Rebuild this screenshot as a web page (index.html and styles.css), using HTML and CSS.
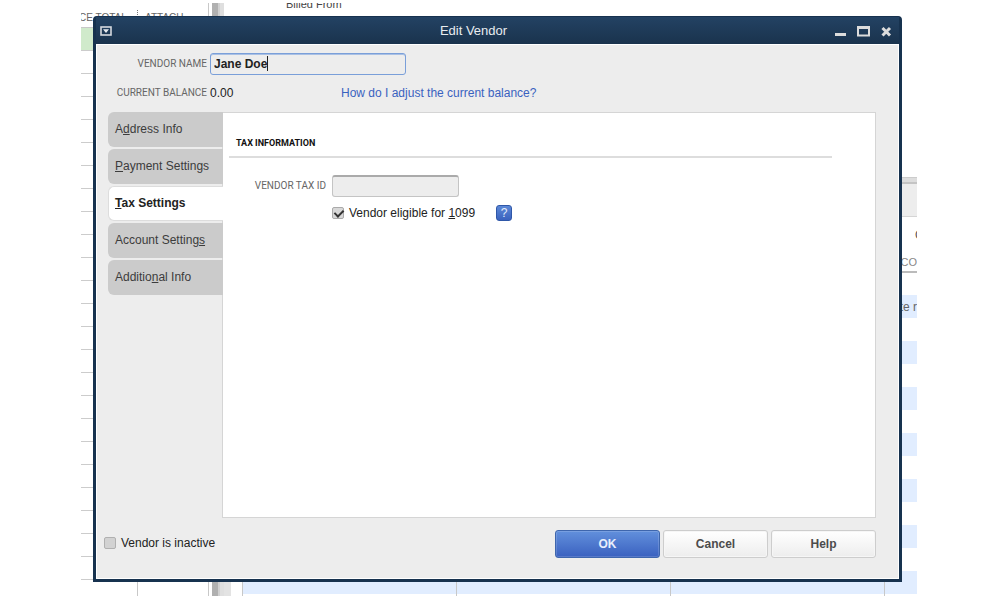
FILE: index.html
```html
<!doctype html>
<html lang="en">
<head>
	<meta charset="UTF-8">
	<title>Edit Vendor</title>

	<link rel="stylesheet" href="styles.css">
</head>
<body>
	<div class="workspace">
		<div class="ledger">
			<div class="ledger-head">
				<span class="ledger-col">CE TOTAL</span>
				<span class="ledger-col">ATTACH</span>
			</div>
			<div class="ledger-rows"></div>
		</div>
		<div class="scrollbar"></div>
		<div class="bill">
			<div class="bill-top">Billed From</div>
			<div class="bill-main">
				<div class="bill-toolbar"></div>
				<div class="bill-title">C</div>
				<div class="bill-head">CCO</div>
				<div class="bill-rows">
					<div class="bill-col"></div>
					<div class="bill-col"></div>
					<div class="bill-col"></div>
					<div class="bill-col bill-note">te r</div>
				</div>
			</div>
		</div>

		<form class="dialog">
			<header class="titlebar">
				<button type="button" class="win-button" aria-label="Window menu">
					<svg width="12" height="10" viewBox="0 0 12 10"><rect x="1" y="1" width="10" height="8" fill="none" stroke="#d5d9de" stroke-width="1.6"/><path d="M3 3.200h6L6 7z" fill="#e8ecf0"/></svg>
				</button>
				<h1>Edit Vendor</h1>
				<div class="win-buttons">
					<button type="button" class="win-button" aria-label="Minimize">
						<svg width="12" height="11" viewBox="0 0 12 11"><path d="M0 7h11v3h-11z" fill="#dcdcdc"/></svg>
					</button>
					<button type="button" class="win-button" aria-label="Maximize">
						<svg width="14" height="11" viewBox="0 0 14 11"><path d="M0 0h13v10.500h-13zM2 3v5.500h9V3z" fill="#dcdcdc" fill-rule="evenodd"/></svg>
					</button>
					<button type="button" class="win-button" aria-label="Close">
						<svg width="11" height="11" viewBox="0 0 11 11"><path d="M1.500 2l7.500 7.500M9 2l-7.500 7.500" stroke="#dcdcdc" stroke-width="3"/></svg>
					</button>
				</div>
			</header>

			<div class="content">
				<div class="row name-row">
					<label class="caption" for="name">VENDOR NAME</label>
					<span class="name-field">
						<input type="text" id="name" class="name" value="Jane Doe">
						<span class="caret"></span>
					</span>
				</div>
				<div class="row balance-row">
					<span class="caption">CURRENT BALANCE</span>
					<span class="balance">0.00</span>
					<a href="#">How do I adjust the current balance?</a>
				</div>

				<div class="tabbed">
					<div class="tabs" role="tablist">
						<button type="button" role="tab" class="tab">A<u>d</u>dress Info</button>
						<button type="button" role="tab" class="tab"><u>P</u>ayment Settings</button>
						<button type="button" role="tab" class="tab active" aria-selected="true"><u>T</u>ax Settings</button>
						<button type="button" role="tab" class="tab">Account Setting<u>s</u></button>
						<button type="button" role="tab" class="tab">Additio<u>n</u>al Info</button>
					</div>
					<section class="panel" role="tabpanel">
						<h2>TAX INFORMATION</h2>
						<div class="field">
							<label class="caption" for="tax-id">VENDOR TAX ID</label>
							<input type="text" id="tax-id" class="tax-id">
						</div>
						<div class="field eligible">
							<input type="checkbox" id="eligible" class="check" checked>
							<label for="eligible">Vendor eligible for <u>1</u>099</label>
							<button type="button" class="info">?</button>
						</div>
					</section>
				</div>

				<footer class="footer">
					<input type="checkbox" id="inactive" class="check">
					<label for="inactive">Vendor is inactive</label>
					<div class="actions">
						<button type="button" class="button primary">OK</button>
						<button type="button" class="button">Cancel</button>
						<button type="button" class="button">Help</button>
					</div>
				</footer>
			</div>
		</form>
	</div>
</body>
</html>
```
FILE: styles.css
```css
* {
	box-sizing: border-box;
}

body {
	margin: 0;
	background: #fff;
	font: 12px/16px "Liberation Sans", Arial, sans-serif;
	color: #222;
}

button,
input {
	margin: 0;
	padding: 0;
	font: inherit;
	color: inherit;
}

/* Windows behind the dialog */

.workspace {
	position: relative;
	display: flex;
	height: calc(100vh - 6px);
	min-height: 400px;
	margin: 3px 81px;
	overflow: hidden;
}

.ledger {
	display: flex;
	flex-direction: column;
	width: 128px;
	margin-right: 3px;
	border-right: 1px solid #c8c8c8;
}

.ledger-head {
	display: flex;
	height: 25px;
	padding-top: 7px;
	border-bottom: 1px solid #c8c8c8;
	font-size: 10px;
	color: #666;
}

.ledger-col {
	width: 56px;
	text-indent: -2px;
	white-space: nowrap;
}

.ledger-col + .ledger-col {
	border-left: 1px dotted #777;
	text-indent: 7px;
}

.ledger-rows {
	flex: 1;
	background:
		linear-gradient(#d0eacb, #d0eacb) 0 0 / 100% 22px no-repeat,
		linear-gradient(#c8c8c8, #c8c8c8) 56px 0 / 1px 100% no-repeat,
		repeating-linear-gradient(transparent 0 22px, #ccc 22px 23px);
}

.scrollbar {
	width: 12px;
	background: linear-gradient(to right, #b0b0b0 6px, #d0d0d0 6px 8px, #dfdfdf 8px);
}

.bill {
	flex: 1;
	display: flex;
	flex-direction: column;
	min-width: 0;
	overflow: hidden;
}

.bill-top {
	height: 174px;
	padding-left: 62px;
	margin-top: -7px;
	margin-bottom: 7px;
	font-size: 11px;
	color: #444;
}

.bill-main {
	flex: 1;
	display: flex;
	flex-direction: column;
	border-left: 7px solid #e3e3e3;
	padding-left: 11px;
	color: #666;
}

.bill-toolbar {
	height: 40px;
	border-top: 1px solid #ccc;
	border-bottom: 1px solid #d5d5d5;
	background: linear-gradient(#ddd 4px, #c4c4c4 4px 6px, #ededed 6px);
}

.bill-title {
	height: 36px;
	padding-top: 10px;
	text-indent: calc(100% - 2px);
	color: #555;
	white-space: nowrap;
}

.bill-head {
	height: 20px;
	padding-top: 1px;
	border-bottom: 2px solid #bbb;
	font-size: 11px;
	color: #888;
	text-align: right;
}

.bill-rows {
	flex: 1;
	display: flex;
	background: repeating-linear-gradient(transparent 0 22px, #e1edff 22px 45px, transparent 45px 46px);
}

.bill-col {
	width: 214px;
	border-left: 1px solid #c8c8c8;
}

.bill-note {
	flex: 1;
	padding-top: 26px;
	text-align: right;
}

/* Dialog */

.dialog {
	position: absolute;
	top: 13px;
	right: 15px;
	bottom: 14px;
	left: 12px;
	display: flex;
	flex-direction: column;
	border: 3px solid #17324f;
	border-top-width: 1px;
	border-radius: 4px 4px 0 0;
	background: #17324f;
}

.titlebar {
	display: flex;
	align-items: center;
	height: 27px;
	padding: 1px 7px 0 4px;
	background: linear-gradient(#234263, #1a334d);
	color: #e8ecf0;
}

.titlebar h1 {
	flex: 1;
	margin: 0;
	font-size: 13px;
	font-weight: normal;
	text-align: center;
}

.win-button {
	display: flex;
	border: 0;
	background: none;
}

.win-buttons {
	display: flex;
	gap: 10px;
}

.content {
	flex: 1;
	display: flex;
	flex-direction: column;
	padding: 8px 22px 20px 11px;
	border: 1px solid #fff;
	background: #ededed;
}

.row {
	display: flex;
	align-items: center;
	gap: 3px;
}

.row .caption {
	width: 99px;
}

.caption {
	font: 10px/16px Roboto, sans-serif;
	color: #666;
	text-align: right;
	white-space: nowrap;
}

.name-field {
	position: relative;
	width: 196px;
}

.name {
	display: block;
	width: 100%;
	height: 22px;
	padding: 0 3px;
	border: 1px solid #7a9fd9;
	border-radius: 3px;
	outline: 0;
	background: #ededed;
	box-shadow: inset 0 1px #a9c0e4;
	font-weight: bold;
}

.caret {
	position: absolute;
	top: 3px;
	left: 57px;
	width: 1px;
	height: 15px;
	background: #222;
}

.balance-row {
	padding: 10px 0 11px;
}

.balance {
	width: 128px;
}

a {
	color: #3a62c0;
	text-decoration: none;
}

.tabbed {
	flex: 1;
	display: flex;
}

.tabs {
	z-index: 1;
	display: flex;
	flex-direction: column;
	gap: 2px;
	width: 115px;
	margin-right: -1px;
}

.tab {
	height: 35px;
	padding: 0 0 2px 7px;
	border: 0;
	border-radius: 6px 0 0 6px;
	background: #cbcbcb;
	color: #3c3c3c;
	text-align: left;
	white-space: nowrap;
}

.tab.active {
	border: 1px solid #ddd;
	border-right: 0;
	padding-left: 6px;
	background: #fff;
	color: #222;
	font-weight: bold;
}

.panel {
	flex: 1;
	padding: 24px 43px 0 6px;
	border: 1px solid #d5d5d5;
	background: #fff;
}

.panel h2 {
	margin: 0 0 17px;
	padding: 0 0 7px 7px;
	border-bottom: 2px solid #ddd;
	font: bold 9px/12px Roboto, sans-serif;
	color: #111;
}

.field {
	display: flex;
	align-items: center;
}

.field .caption {
	width: 97px;
	margin-right: 6px;
}

.tax-id {
	width: 127px;
	height: 22px;
	padding: 0 4px;
	border: 1px solid #c4c4c4;
	border-top: 2px solid #aaa;
	border-radius: 3px;
	background: #ededed;
}

.eligible {
	padding: 8px 0 0 103px;
}

.check {
	appearance: none;
	width: 12px;
	height: 12px;
	margin-right: 5px;
	border: 1px solid #aaa;
	border-radius: 2px;
	background: #d8d8d8;
}

.check:checked:before {
	content: "";
	display: block;
	width: 4px;
	height: 7px;
	margin-left: 3px;
	border: solid #333;
	border-width: 0 2px 2px 0;
	transform: rotate(45deg);
}

.info {
	width: 16px;
	height: 16px;
	margin-left: 21px;
	border: 1px solid #2f57a8;
	border-radius: 3px;
	background: linear-gradient(#5c88d6, #3a62be);
	color: #e4ecfa;
	line-height: 14px;
}

.footer {
	display: flex;
	align-items: center;
	margin-left: -4px;
	padding-top: 12px;
}

.footer .check {
	margin-bottom: 3px;
	border-color: #b0b0b0;
	background: #d2d2d2;
}

.footer label {
	padding-bottom: 2px;
}

.actions {
	display: flex;
	gap: 3px;
	margin-left: auto;
}

.button {
	width: 105px;
	height: 28px;
	border: 1px solid #cdcdcd;
	border-radius: 3px;
	background: linear-gradient(#fff, #ededed);
	box-shadow: inset 0 0 0 1px #f6f6f6;
	color: #4c4c4c;
	font-weight: bold;
}

.button.primary {
	border-color: #3e66ad;
	background: linear-gradient(#6290dc, #3a61c0);
	box-shadow: inset 0 0 0 1px rgba(255, 255, 255, 0.15);
	color: #e8effc;
}
```
